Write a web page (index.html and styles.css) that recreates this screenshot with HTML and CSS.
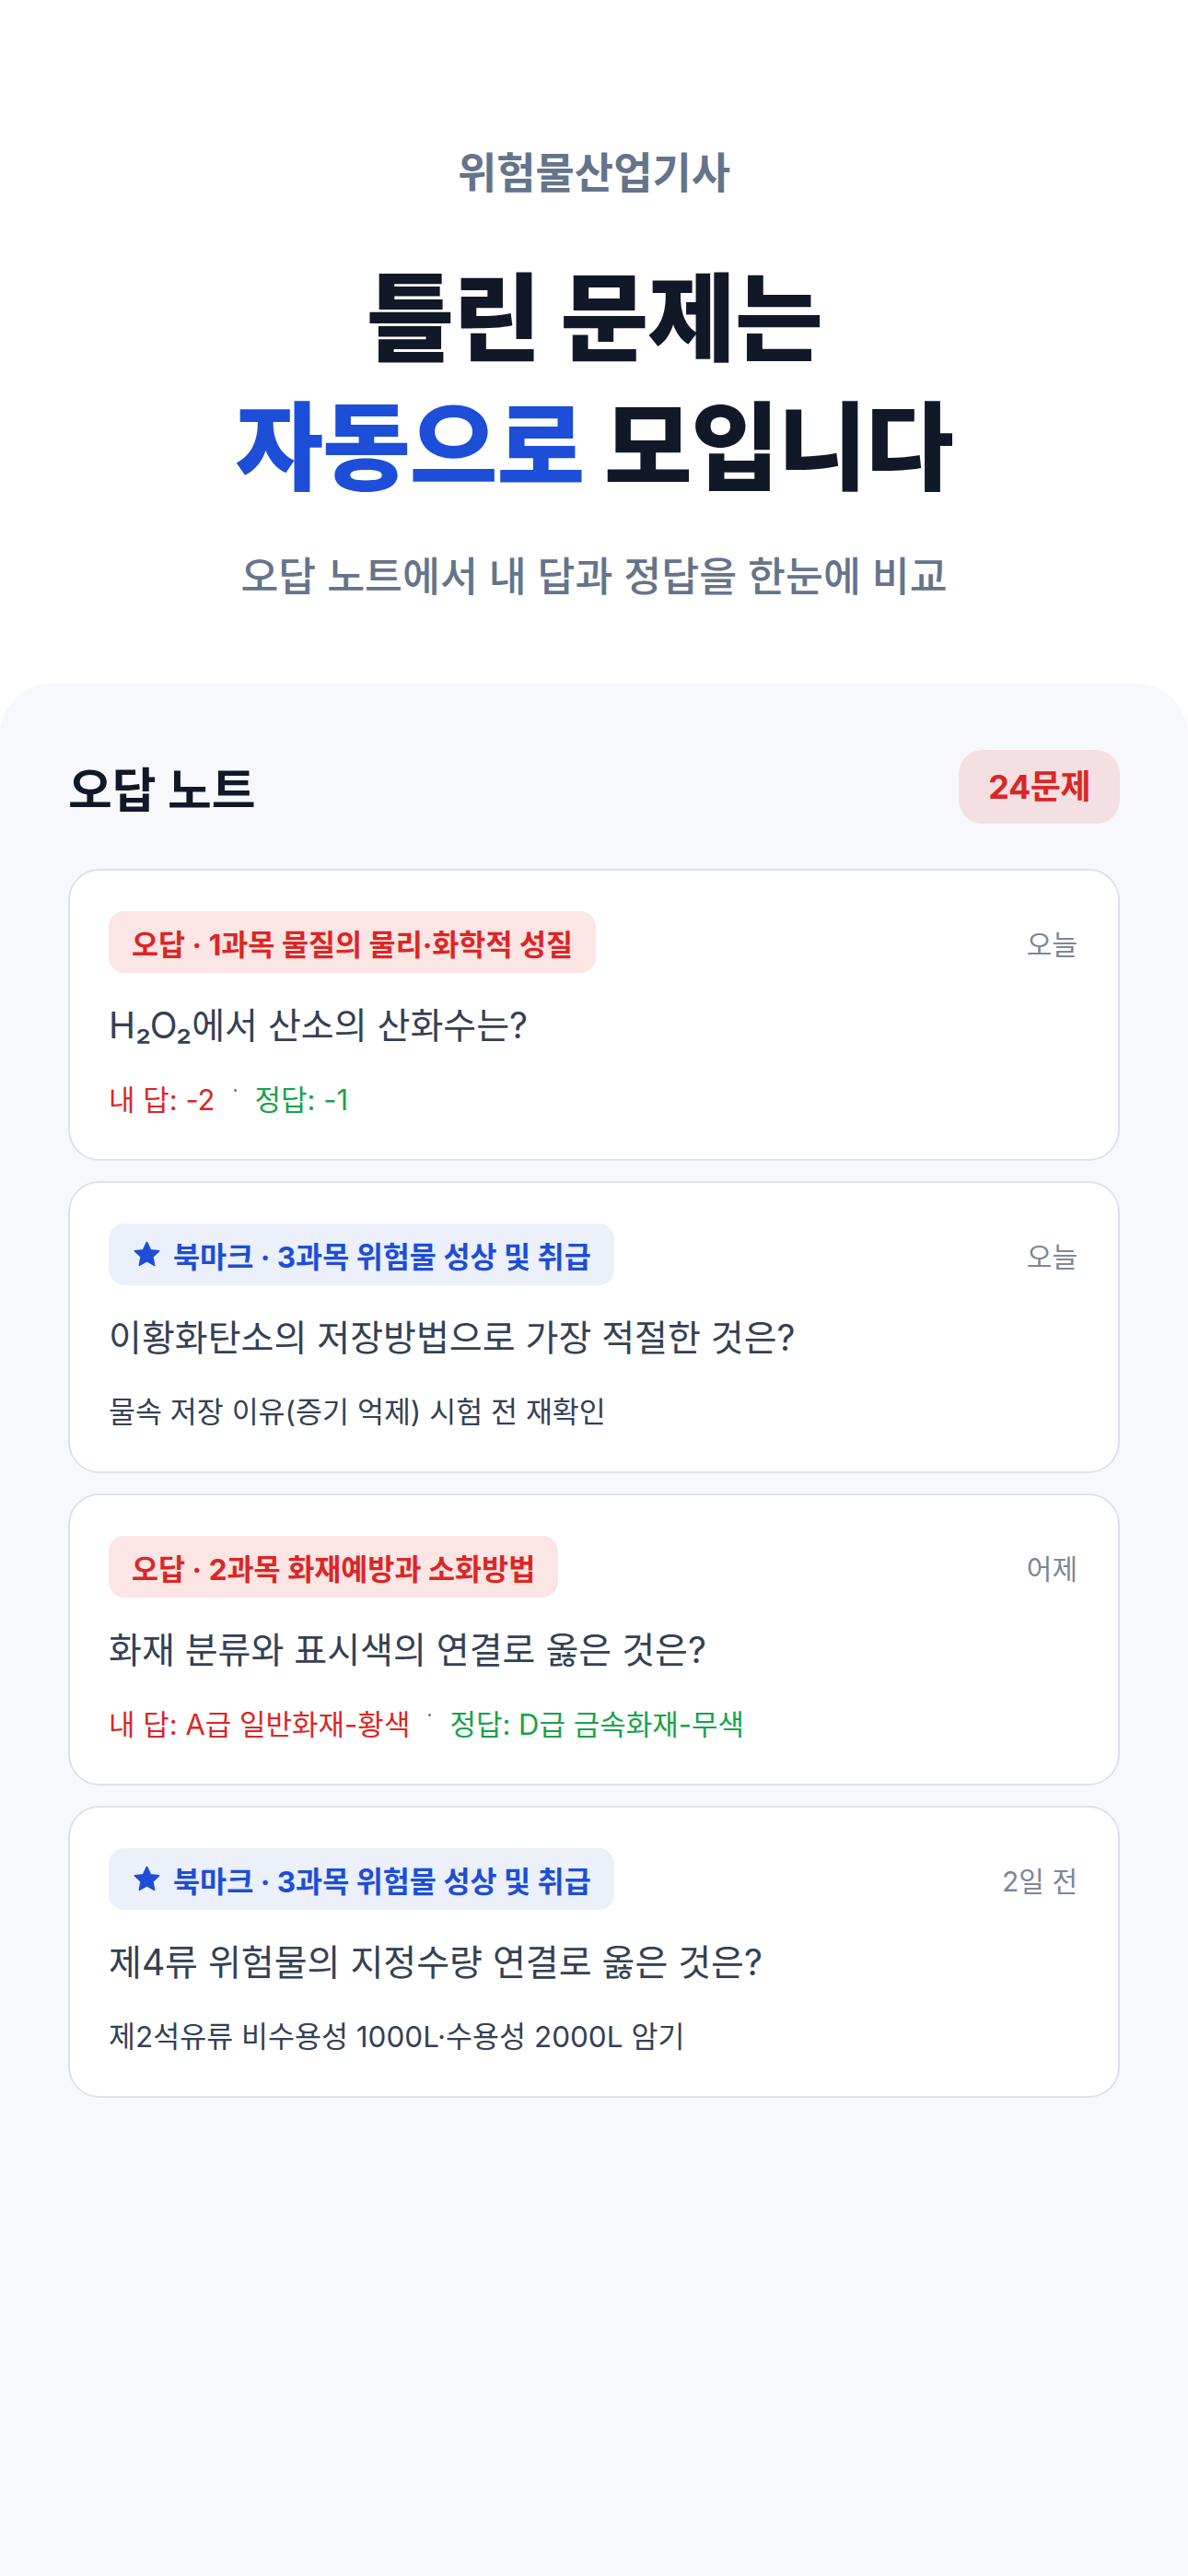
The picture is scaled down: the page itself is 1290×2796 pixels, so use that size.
FILE: index.html
```html
<!DOCTYPE html>
<html lang="ko">
<head>
    <meta charset="UTF-8">
    <meta name="viewport" content="width=device-width, initial-scale=1.0">
    <title>오답 노트</title>
    <link rel="stylesheet" href="styles.css">
</head>
<body>
    <header class="hero">
        <p class="eyebrow">위험물산업기사</p>
        <h1 class="headline">틀린 문제는<br><span class="accent">자동으로</span> 모입니다</h1>
        <p class="subtitle">오답 노트에서 내 답과 정답을 한눈에 비교</p>
    </header>

    <main class="panel">
        <div class="panel-head">
            <h2>오답 노트</h2>
            <span class="count">24문제</span>
        </div>

        <div class="card-list">
            <article class="card">
                <div class="card-top">
                    <span class="tag tag-wrong">오답 · 1과목 물질의 물리·화학적 성질</span>
                    <span class="date">오늘</span>
                </div>
                <p class="question">H₂O₂에서 산소의 산화수는?</p>
                <div class="answers">
                    <span class="mine">내 답: -2</span>
                    <span class="sep"></span>
                    <span class="correct">정답: -1</span>
                </div>
            </article>

            <article class="card">
                <div class="card-top">
                    <span class="tag tag-mark">
                        <svg class="star" viewBox="0 0 24 24"><path d="M12 2.5l2.9 6.1 6.6.8-4.9 4.6 1.3 6.6L12 17.3l-5.9 3.3 1.3-6.6-4.9-4.6 6.6-.8z"/></svg>
                        북마크 · 3과목 위험물 성상 및 취급
                    </span>
                    <span class="date">오늘</span>
                </div>
                <p class="question">이황화탄소의 저장방법으로 가장 적절한 것은?</p>
                <p class="note">물속 저장 이유(증기 억제) 시험 전 재확인</p>
            </article>

            <article class="card">
                <div class="card-top">
                    <span class="tag tag-wrong">오답 · 2과목 화재예방과 소화방법</span>
                    <span class="date">어제</span>
                </div>
                <p class="question">화재 분류와 표시색의 연결로 옳은 것은?</p>
                <div class="answers">
                    <span class="mine">내 답: A급 일반화재-황색</span>
                    <span class="sep"></span>
                    <span class="correct">정답: D급 금속화재-무색</span>
                </div>
            </article>

            <article class="card">
                <div class="card-top">
                    <span class="tag tag-mark">
                        <svg class="star" viewBox="0 0 24 24"><path d="M12 2.5l2.9 6.1 6.6.8-4.9 4.6 1.3 6.6L12 17.3l-5.9 3.3 1.3-6.6-4.9-4.6 6.6-.8z"/></svg>
                        북마크 · 3과목 위험물 성상 및 취급
                    </span>
                    <span class="date">2일 전</span>
                </div>
                <p class="question">제4류 위험물의 지정수량 연결로 옳은 것은?</p>
                <p class="note">제2석유류 비수용성 1000L·수용성 2000L 암기</p>
            </article>
        </div>
    </main>
</body>
</html>
```

FILE: styles.css
```css
body {
    margin: 0;
    min-height: 100vh;
    display: flex;
    flex-direction: column;
    background-color: #ffffff;
    font-family: Inter, "Noto Sans CJK KR", sans-serif;
    color: #111827;
}
p, h1, h2 {
    margin: 0;
}
.hero {
    padding: 158px 0 89px;
    text-align: center;
}
.eyebrow {
    font-size: 46px;
    line-height: 59px;
    font-weight: 700;
    color: #64748b;
}
.headline {
    margin-top: 59px;
    font-size: 104px;
    line-height: 140px;
    font-weight: 800;
    letter-spacing: -1px;
    color: #111827;
}
.accent {
    color: #1d4ed8;
}
.subtitle {
    margin-top: 44px;
    font-size: 44.5px;
    line-height: 53px;
    font-weight: 500;
    color: #64748b;
}
.panel {
    flex: 1;
    background-color: #f7f8fb;
    border-radius: 56px 56px 0 0;
    padding: 72px 74px 80px;
}
.panel-head {
    display: flex;
    justify-content: space-between;
    align-items: center;
    height: 80px;
    margin-bottom: 49px;
}
.panel-head h2 {
    font-size: 52px;
    font-weight: 700;
    color: #111827;
}
.count {
    height: 80px;
    line-height: 80px;
    padding: 0 32px;
    border-radius: 26px;
    background-color: #f4dfe2;
    color: #dc2626;
    font-size: 36px;
    font-weight: 700;
    letter-spacing: -0.5px;
}
.card-list {
    display: flex;
    flex-direction: column;
    gap: 22px;
}
.card {
    background-color: #ffffff;
    border: 2px solid #dce2eb;
    border-radius: 34px;
    padding: 44px 44px 43px 42px;
}
.card-top {
    display: flex;
    justify-content: space-between;
    align-items: center;
}
.tag {
    display: inline-flex;
    align-items: center;
    height: 67px;
    padding: 0 25px;
    border-radius: 17px;
    font-size: 31.6px;
    font-weight: 700;
}
.tag-wrong {
    background-color: #fbe5e5;
    color: #dc2626;
}
.tag-mark {
    background-color: #ebf0fb;
    color: #1d4ed8;
}
.star {
    width: 33px;
    height: 33px;
    margin-right: 12px;
    fill: #1d4ed8;
    stroke: #1d4ed8;
    stroke-width: 1.2;
    stroke-linejoin: round;
}
.date {
    font-size: 30px;
    color: #7b8797;
}
.question {
    margin-top: 32px;
    font-size: 39px;
    line-height: 50px;
    color: #334155;
}
.note {
    margin-top: 35px;
    font-size: 31.5px;
    line-height: 42px;
    color: #334155;
}
.answers {
    margin-top: 35px;
    display: flex;
    font-size: 31px;
    line-height: 42px;
}
.mine {
    color: #dc2626;
}
.correct {
    color: #16a34a;
}
.sep {
    width: 3px;
    height: 3px;
    margin: 9px 20px 0;
    border-radius: 50%;
    background-color: #64748b;
}
```
